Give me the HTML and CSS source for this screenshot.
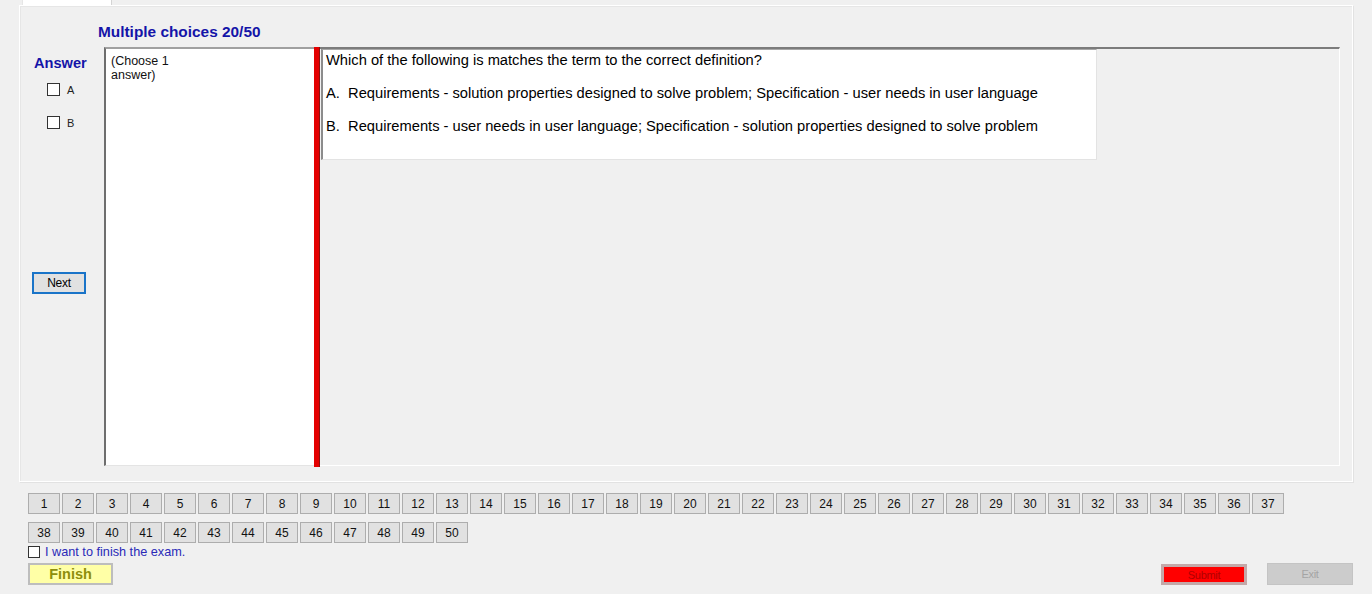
FILE: index.html
```html
<!DOCTYPE html>
<html>
<head>
<meta charset="utf-8">
<title>Exam</title>
<link rel="stylesheet" href="styles.css">
</head>
<body>
<div class="window">
  <div class="tabstrip"><div class="tab"></div></div>
  <div class="tabpage">
    <div class="title">Multiple choices 20/50</div>
    <div class="main">
      <div class="answers">
        <div class="answer-label">Answer</div>
        <label class="opt opt-a"><span class="cb"></span>A</label>
        <label class="opt opt-b"><span class="cb"></span>B</label>
        <button class="next">Next</button>
      </div>
      <div class="choose">(Choose 1<br>answer)</div>
      <div class="redbar"></div>
      <div class="qpanel">
        <div class="qbox">
          <p>Which of the following is matches the term to the correct definition?</p>
          <p>A.&nbsp;&nbsp;Requirements - solution properties designed to solve problem; Specification - user needs in user language</p>
          <p>B.&nbsp;&nbsp;Requirements - user needs in user language; Specification - solution properties designed to solve problem</p>
        </div>
      </div>
    </div>
  </div>
  <div class="nav">
    <button>1</button><button>2</button><button>3</button><button>4</button><button>5</button><button>6</button><button>7</button><button>8</button><button>9</button><button>10</button>
    <button>11</button><button>12</button><button>13</button><button>14</button><button>15</button><button>16</button><button>17</button><button>18</button><button>19</button><button>20</button>
    <button>21</button><button>22</button><button>23</button><button>24</button><button>25</button><button>26</button><button>27</button><button>28</button><button>29</button><button>30</button>
    <button>31</button><button>32</button><button>33</button><button>34</button><button>35</button><button>36</button><button>37</button><button>38</button><button>39</button><button>40</button>
    <button>41</button><button>42</button><button>43</button><button>44</button><button>45</button><button>46</button><button>47</button><button>48</button><button>49</button><button>50</button>
  </div>
  <label class="finish-check"><span class="cb"></span>I want to finish the exam.</label>
  <div class="actions">
    <button class="finish">Finish</button>
    <button class="submit">Submit</button>
    <button class="exit">Exit</button>
  </div>
</div>
</body>
</html>
```
FILE: styles.css
```css
html, body {
  margin: 0;
  padding: 0;
  background: #f0f0f0;
  font-family: "Liberation Sans", Arial, sans-serif;
  color: #000;
}

.window {
  width: 1372px;
  height: 594px;
  overflow: hidden;
  background: #f0f0f0;
}

button {
  font-family: "Liberation Sans", Arial, sans-serif;
  padding: 0;
  cursor: default;
}

.tabstrip {
  height: 5px;
}

.tab {
  margin-left: 22px;
  width: 88px;
  height: 5px;
  background: #ffffff;
  border-right: 1px solid #d4d4d4;
  border-left: 1px solid #e6e6e6;
}

.tabpage {
  margin-left: 19px;
  width: 1334px;
  height: 477px;
  box-sizing: border-box;
  border: 1px solid #ffffff;
  box-shadow: 1px 1px 0 #e2e2e2, inset 1px 1px 0 #e6e6e6;
}

.title {
  margin-top: 17px;
  padding-left: 78px;
  font-size: 15.4px;
  line-height: 17px;
  font-weight: bold;
  color: #1414a8;
}

.main {
  margin-top: 7px;
  display: flex;
  height: 419px;
}

.answers {
  width: 84px;
  flex: none;
  display: flex;
  flex-direction: column;
  align-items: flex-start;
}

.answer-label {
  margin-top: 8px;
  margin-left: 14px;
  font-size: 14.6px;
  line-height: 16px;
  font-weight: bold;
  color: #1414a8;
}

.opt {
  display: flex;
  align-items: center;
  gap: 7px;
  margin-left: 27px;
  height: 13px;
  font-size: 11px;
  color: #222;
}

.opt-a { margin-top: 12px; }
.opt-b { margin-top: 20px; }

.cb {
  display: inline-block;
  width: 13px;
  height: 13px;
  box-sizing: border-box;
  border: 1px solid #333333;
  background: #ffffff;
  flex: none;
}

.next {
  margin-top: 143px;
  margin-left: 12px;
  width: 54px;
  height: 22px;
  box-sizing: border-box;
  border: 2px solid #1a74c8;
  background: #e1e1e1;
  font-size: 12px;
  color: #000;
  letter-spacing: -0.3px;
}

.choose {
  width: 210px;
  flex: none;
  box-sizing: border-box;
  background: #ffffff;
  border-left: 2px solid #6e6e6e;
  border-top: 2px solid #a0a0a0;
  border-bottom: 1px solid #e4e4e4;
  padding: 5px 0 0 5px;
  font-size: 12.5px;
  line-height: 14px;
  color: #111;
}

.redbar {
  width: 5px;
  flex: none;
  background: #e40000;
  border-right: 1px solid #8c1010;
  margin-bottom: -1px;
}

.qpanel {
  flex: 1;
  box-sizing: border-box;
  border-top: 2px solid #7c7c7c;
  border-right: 1px solid #ffffff;
  border-bottom: 1px solid #ffffff;
  margin-right: 12px;
}

.qbox {
  margin-left: 1px;
  width: 776px;
  height: 111px;
  box-sizing: border-box;
  background: #ffffff;
  border-top: 1px solid #a8a8a8;
  border-left: 2px solid #8c8c8c;
  border-right: 1px solid #e3e3e3;
  border-bottom: 1px solid #e3e3e3;
  padding: 2px 0 0 3px;
  font-size: 14.7px;
  line-height: 16px;
  color: #000;
}

.qbox p {
  margin: 0 0 17px 0;
  white-space: nowrap;
}

.nav {
  margin-top: 11px;
  margin-left: 28px;
  display: grid;
  grid-template-columns: repeat(37, 32px);
  grid-auto-rows: 21px;
  column-gap: 2px;
  row-gap: 8px;
}

.nav button {
  box-sizing: border-box;
  border: 1px solid #adadad;
  background: #e1e1e1;
  font-size: 12px;
  color: #111;
}

.finish-check {
  margin-top: 2px;
  margin-left: 28px;
  display: flex;
  align-items: center;
  gap: 5px;
  height: 13px;
  font-size: 12.7px;
  color: #2a2ab8;
}

.finish-check .cb {
  width: 12px;
  height: 12px;
}

.actions {
  margin-top: 5px;
  display: flex;
  align-items: flex-start;
}

.finish {
  margin-left: 28px;
  width: 85px;
  height: 22px;
  box-sizing: border-box;
  border: 2px solid #bdbdbd;
  background: #ffffa6;
  font-size: 14.5px;
  font-weight: bold;
  color: #8e8e0c;
}

.submit {
  margin-left: auto;
  margin-top: 1px;
  width: 86px;
  height: 21px;
  box-sizing: border-box;
  border: 3px solid #c4a8a8;
  background: #ff0000;
  font-size: 11px;
  color: #b00000;
  letter-spacing: -0.3px;
}

.exit {
  margin-left: 20px;
  margin-right: 19px;
  width: 86px;
  height: 22px;
  box-sizing: border-box;
  border: 1px solid #c4c4c4;
  background: #cccccc;
  font-size: 11px;
  color: #a4a4a4;
  letter-spacing: -0.3px;
}
```
